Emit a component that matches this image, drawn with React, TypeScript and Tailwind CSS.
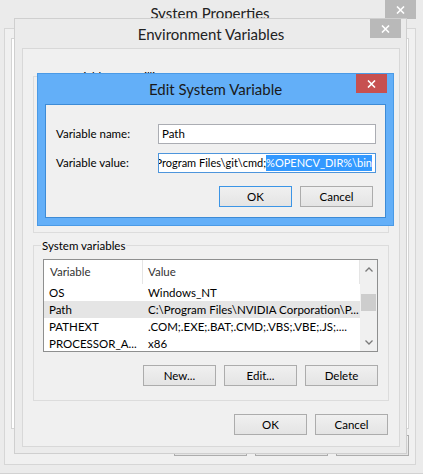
import React from "react";

function CloseX() {
  return (
    <svg width="9" height="8" viewBox="0 0 9 8" className="block">
      <path d="M1 0.5 L8 7.5 M8 0.5 L1 7.5" stroke="#ffffff" strokeWidth="1.6" fill="none" />
    </svg>
  );
}

function Btn({ children, def = false }: { children: React.ReactNode; def?: boolean }) {
  return (
    <div
      className={
        def
          ? "w-[73px] h-[21px] flex items-center justify-center border border-[#3c95e6] bg-linear-to-b from-[#f0f0f0] to-[#e4e4e4]"
          : "w-[73px] h-[21px] flex items-center justify-center border border-[#acacac] bg-linear-to-b from-[#f0f0f0] to-[#e4e4e4]"
      }
    >
      {children}
    </div>
  );
}

function Chevron({ up }: { up: boolean }) {
  return (
    <svg width="8" height="5" viewBox="0 0 8 5" className="block">
      <path d={up ? "M0.5 4.5 L4 1 L7.5 4.5" : "M0.5 0.5 L4 4 L7.5 0.5"} stroke="#7a7a7a" strokeWidth="1.3" fill="none" />
    </svg>
  );
}

const rows = [
  { n: "OS", v: "Windows_NT", sel: false },
  { n: "Path", v: "C:\\Program Files\\NVIDIA Corporation\\P...", sel: true },
  { n: "PATHEXT", v: ".COM;.EXE;.BAT;.CMD;.VBS;.VBE;.JS;....", sel: false },
  { n: "PROCESSOR_A...", v: "x86", sel: false },
];

export default function App() {
  return (
    <div className="relative w-[423px] h-[474px] overflow-hidden bg-[#ebebeb] text-[11.5px] leading-[16px] text-black font-['Lato',sans-serif]">
      {/* System Properties (background window) */}
      <div className="absolute left-[-4px] top-[-4px] w-[428px] h-[478px] bg-[#ebebeb] border border-[#d2d2d2] px-[7px] pb-[8px] flex flex-col">
        <div className="h-[31px] shrink-0 flex items-center justify-center text-[15px] text-[#222]">System Properties</div>
        <div className="absolute right-[7px] top-[3px] w-[31px] h-[19px] bg-[#b9b9b9] flex items-center justify-center">
          <CloseX />
        </div>
        <div className="flex-1 border border-[#d6d6d6] bg-[#f0f0f0] pt-[9px] px-[6px] flex flex-col">
          <div className="h-[391px] border border-[#d4d4d4] bg-white" />
          <div className="mt-[6px] flex justify-end gap-[8px]">
            <Btn>OK</Btn>
            <Btn>Cancel</Btn>
            <Btn>Apply</Btn>
          </div>
        </div>
      </div>

      {/* Environment Variables window */}
      <div className="absolute left-[14px] top-[18px] w-[393px] h-[436px] bg-[#ebebeb] border border-[#cfcfcf] pl-[7px] pr-[6px] pb-[6px] flex flex-col">
        <div className="h-[29px] shrink-0 flex items-center justify-center text-[15px] text-[#222]">Environment Variables</div>
        <div className="absolute right-[5px] top-0 w-[31px] h-[19px] bg-[#b9b9b9] flex items-center justify-center">
          <CloseX />
        </div>
        <div className="flex-1 border border-[#d8d8d8] bg-[#f0f0f0] px-[10px] flex flex-col">
          <fieldset className="mt-[20px] h-[164px] border border-[#dcdcdc]">
            <legend className="ml-[7px] px-[1px] leading-[15px]">User variables for William</legend>
          </fieldset>

          <fieldset className="mt-[5px] border border-[#dcdcdc] pb-[14px]">
            <legend className="ml-[7px] px-[1px] leading-[15px]">System variables</legend>
            <div className="mt-[6px] ml-[9px] mr-[10px] h-[93px] border border-[#8e8f8f] bg-white flex overflow-hidden">
              <div className="flex-1 flex flex-col">
                <div className="h-[24px] shrink-0 flex text-[#333]">
                  <div className="w-[99px] pl-[6px] flex items-center border-r border-[#e5e5e5]">Variable</div>
                  <div className="flex-1 pl-[5px] flex items-center border-r border-[#e5e5e5]">Value</div>
                </div>
                {rows.map((r) => (
                  <div
                    key={r.n}
                    className={
                      r.sel
                        ? "h-[17px] shrink-0 flex items-center bg-[#e5e5e5]"
                        : "h-[17px] shrink-0 flex items-center"
                    }
                  >
                    <div className="w-[99px] pl-[5px] whitespace-nowrap leading-[17px]">{r.n}</div>
                    <div className="flex-1 pl-[5px] whitespace-nowrap leading-[17px]">{r.v}</div>
                  </div>
                ))}
              </div>
              <div className="w-[17px] shrink-0 bg-[#f0f0f0] flex flex-col">
                <div className="h-[18px] flex items-center justify-center">
                  <Chevron up />
                </div>
                <div className="flex-1 pt-[16px] px-[1px]">
                  <div className="h-[17px] bg-[#cdcdcd]" />
                </div>
                <div className="h-[18px] flex items-center justify-center">
                  <Chevron up={false} />
                </div>
              </div>
            </div>
            <div className="mt-[13px] mr-[10px] flex justify-end gap-[8px]">
              <Btn>New...</Btn>
              <Btn>Edit...</Btn>
              <Btn>Delete</Btn>
            </div>
          </fieldset>

          <div className="mt-[13px] mr-[1px] flex justify-end gap-[8px]">
            <Btn>OK</Btn>
            <Btn>Cancel</Btn>
          </div>
        </div>
      </div>

      {/* Edit System Variable dialog (active) */}
      <div className="absolute left-[37px] top-[73px] w-[357px] h-[153px] bg-[#63aff8] border border-[#4a9ae6] px-[7px] pb-[7px] flex flex-col">
        <div className="h-[30px] shrink-0 flex items-center justify-center text-[15px] text-[#1a1a1a]">Edit System Variable</div>
        <div className="absolute right-[6px] top-0 w-[31px] h-[19px] bg-[#c75050] flex items-center justify-center">
          <CloseX />
        </div>
        <div className="flex-1 border border-[#3d8bd6] bg-[#f0f0f0] pt-[19px] pl-[10px] pr-[9px] flex flex-col">
          <div className="flex items-center">
            <div className="w-[102px]">Variable name:</div>
            <div className="flex-1 h-[20px] border border-[#abadb3] bg-white pl-[3px] flex items-center">Path</div>
          </div>
          <div className="mt-[9px] flex items-center">
            <div className="w-[102px]">Variable value:</div>
            <div className="flex-1 h-[20px] border border-[#4d95dc] bg-white pr-[3px] flex items-center justify-end overflow-hidden whitespace-nowrap text-[11px]">
              <span className="shrink-0">C:\Program Files\git\cmd;</span>
              <span className="shrink-0 bg-[#3399ff] text-white leading-[16px]">%OPENCV_DIR%\bin</span>
            </div>
          </div>
          <div className="mt-[13px] mr-[3px] flex justify-end gap-[8px]">
            <Btn def>OK</Btn>
            <Btn>Cancel</Btn>
          </div>
        </div>
      </div>
    </div>
  );
}
